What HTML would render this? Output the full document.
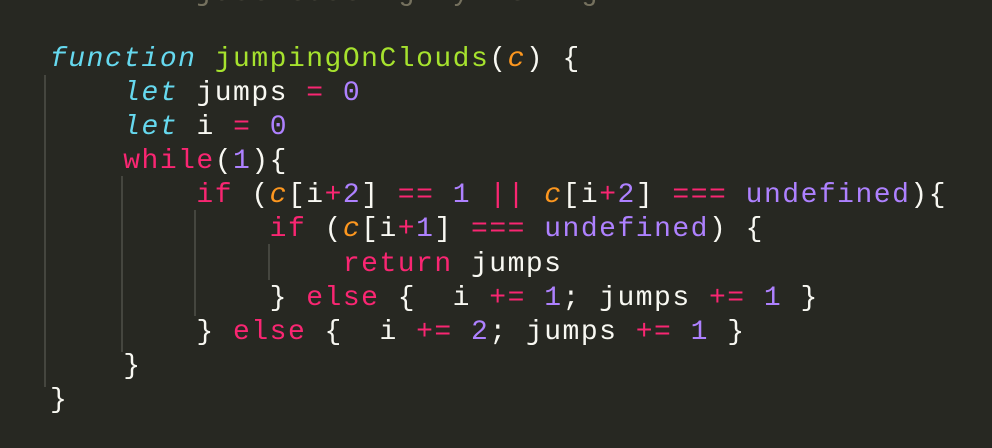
<!DOCTYPE html>
<html><head><meta charset="utf-8"><style>
html,body{margin:0;padding:0;width:992px;height:448px;overflow:hidden;background:#272822;}
.l{position:absolute;left:50px;white-space:pre;font-family:"Liberation Mono",monospace;font-size:28px;letter-spacing:1.5px;line-height:34px;color:#f8f8f2;}
.c{color:#66d9ef;font-style:italic}.g{color:#a6e22e}.o{color:#fd971f;font-style:italic}
.p{color:#f92672}.v{color:#ae81ff}.s{color:#75715e}
.gd{position:absolute;width:2px;background:#45463f;}
</style></head><body>
<div class="gd" style="left:44px;top:75px;height:312px"></div>
<div class="gd" style="left:121px;top:176px;height:176px"></div>
<div class="gd" style="left:194px;top:210px;height:106px"></div>
<div class="gd" style="left:268px;top:244px;height:36px"></div>
<div class="l s" style="top:-23px">        just testing my  thing   </div>
<div class="l" style="top:43px"><span class="c">function</span> <span class="g">jumpingOnClouds</span>(<span class="o">c</span>) {</div>
<div class="l" style="top:77px">    <span class="c">let</span> jumps <span class="p">=</span> <span class="v">0</span></div>
<div class="l" style="top:111px">    <span class="c">let</span> i <span class="p">=</span> <span class="v">0</span></div>
<div class="l" style="top:145px">    <span class="p">while</span>(<span class="v">1</span>){</div>
<div class="l" style="top:179px">        <span class="p">if</span> (<span class="o">c</span>[i<span class="p">+</span><span class="v">2</span>] <span class="p">==</span> <span class="v">1</span> <span class="p">||</span> <span class="o">c</span>[i<span class="p">+</span><span class="v">2</span>] <span class="p">===</span> <span class="v">undefined</span>){</div>
<div class="l" style="top:213px">            <span class="p">if</span> (<span class="o">c</span>[i<span class="p">+</span><span class="v">1</span>] <span class="p">===</span> <span class="v">undefined</span>) {</div>
<div class="l" style="top:248px">                <span class="p">return</span> jumps</div>
<div class="l" style="top:282px">            } <span class="p">else</span> {  i <span class="p">+=</span> <span class="v">1</span>; jumps <span class="p">+=</span> <span class="v">1</span> }</div>
<div class="l" style="top:316px">        } <span class="p">else</span> {  i <span class="p">+=</span> <span class="v">2</span>; jumps <span class="p">+=</span> <span class="v">1</span> }</div>
<div class="l" style="top:350px">    }</div>
<div class="l" style="top:384px">}</div>
</body></html>
